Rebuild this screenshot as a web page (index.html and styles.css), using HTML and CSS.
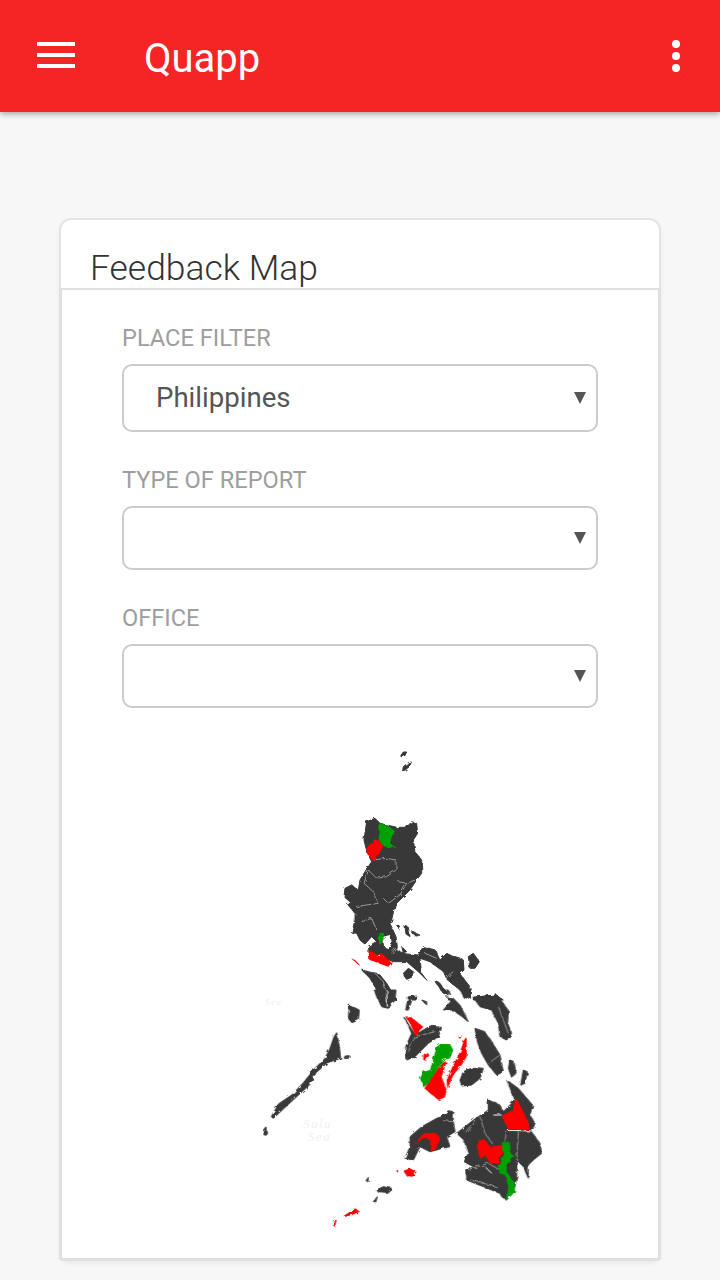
FILE: index.html
```html
<!DOCTYPE html>
<html>
  <head>
    <meta charset="utf-8" />
    <meta name="viewport" content="width=device-width, initial-scale=1" />
    <title>Quapp</title>
    <link rel="stylesheet" href="styles.css">
  </head>
  <body>
    <header class="toolbar">
      <button class="menu-btn" aria-label="Menu">
        <span></span><span></span><span></span>
      </button>
      <h1 class="app-title">Quapp</h1>
      <button class="more-btn" aria-label="More">
        <span></span><span></span><span></span>
      </button>
    </header>

    <main class="content">
      <section class="card">
        <div class="card-head">
          <h2>Feedback Map</h2>
        </div>
        <div class="card-body">
          <form class="filters">
            <label class="field">
              <span class="field-label">PLACE FILTER</span>
              <span class="select-wrap">
                <select class="tall"><option>Philippines</option></select>
              </span>
            </label>
            <label class="field">
              <span class="field-label">TYPE OF REPORT</span>
              <span class="select-wrap">
                <select><option></option></select>
              </span>
            </label>
            <label class="field">
              <span class="field-label">OFFICE</span>
              <span class="select-wrap">
                <select><option></option></select>
              </span>
            </label>
          </form>

          <!-- viewBox uses page coordinates -->
          <svg class="map" viewBox="62 720 596 538">
            <defs>
              <filter id="rough" x="0" y="0" width="100%" height="100%">
                <feTurbulence type="fractalNoise" baseFrequency=".2" numOctaves="2" seed="4" result="noise" />
                <feDisplacementMap in="SourceGraphic" in2="noise" scale="3.5" />
                <feGaussianBlur stdDeviation=".4" />
              </filter>
            </defs>

            <text class="sea" x="303" y="1128">Sulu</text>
            <text class="sea" x="308" y="1141">Sea</text>
            <text class="sea sea-small" x="265" y="1005">Sea</text>

            <g filter="url(#rough)">
            <!-- north: Batanes, Luzon, Mindoro, Bicol -->
            <g transform="translate(240 740) scale(.3333)">
              <path class="land" d="M482 48 490 36 500 36 494 48 486 52Z M488 92 490 80 505 68 514 66 510 78 496 90Z" />
              <path class="land" d="M380 245 405 235 420 250 470 262 500 262 515 245 530 250 533 280 520 300 525 335 545 360 545 400 530 420 510 450 490 470 465 495 455 540 450 550 468 590 472 620 470 632 500 642 535 645 550 620 585 630 600 660 620 640 640 650 670 660 672 690 660 702 690 740 692 775 660 750 622 720 610 695 570 665 540 655 545 700 558 718 535 695 500 665 460 665 420 650 388 640 385 618 410 605 395 590 375 612 360 600 350 580 335 578 345 540 345 520 320 490 335 490 312 470 315 445 335 435 355 450 360 420 375 395 395 365 385 345 378 325 372 300Z" />
              <path class="land" d="M365 690 385 695 420 705 440 730 470 780 415 780 410 750 390 715Z" />
              <path class="land" d="M488 702 505 685 520 695 515 712 500 718Z M685 650 700 640 718 665 705 685 690 685Z M585 725 600 730 625 765 610 760Z M700 772 770 765 790 780 700 780Z M515 770 530 768 528 780 510 780Z M620 770 640 778 640 780 625 780Z" />
              <path class="land" d="M472 556 482 560 478 568Z M495 558 505 562 510 590 498 582Z M515 572 540 586 520 584Z M485 620 500 635 490 638Z" />
              <path class="bay" d="M430 590 450 585 456 610 445 625 432 620Z" />
              <path class="seam" d="M400 360 440 355 468 360 468 390 440 410 410 415 385 390 372 430 400 455 415 490 345 500 M475 425 500 430 525 420 M500 430 480 465 445 490 430 475 M345 520 340 550 M365 545 395 535 410 570 M400 695 430 725 442 770 M620 712 640 695 M555 640 590 655 M455 640 470 620" />
              <path class="green" d="M418 250 440 255 462 270 455 295 450 310 470 325 435 320 425 312 415 295 420 275 413 265Z M413 595 420 580 432 578 428 605 420 615Z" />
              <path class="red" d="M378 325 405 298 415 300 430 320 405 362 395 360 385 345Z M385 630 412 645 425 640 455 668 445 680 415 670 405 665 388 660Z M333 655 345 660 365 680 350 670Z" />
              <circle class="bay" cx="418" cy="648" r="3" />
            </g>

            <!-- south: Palawan, Visayas, Mindanao, Sulu -->
            <g transform="translate(240 990) scale(.3333)">
              <path class="land" d="M403 0 468 0 465 30 445 55 425 50 410 20Z" />
              <path class="land" d="M328 45 358 60 355 90 335 98 325 85Z M290 128 298 170 302 205 262 218 228 248 208 285 172 318 132 355 100 385 94 380 115 342 155 315 190 278 222 238 255 205 270 175 282 140Z M70 420 78 410 80 435 72 435Z M315 198 328 197 325 205 313 205Z" />
              <path class="land" d="M495 85 525 135 570 108 605 112 595 140 565 160 525 200 500 210 497 170 515 130Z" />
              <path class="land" d="M660 270 670 245 700 232 730 235 720 265 695 285 665 288Z" />
              <path class="land" d="M700 22 770 15 790 40 805 60 803 100 815 130 800 150 780 140 775 100 755 60 720 50Z M705 115 735 125 755 155 780 195 790 245 770 255 745 225 725 190 712 155Z M810 210 822 215 828 250 815 262 805 235Z M850 240 862 245 855 280 842 285Z" />
              <path class="land" d="M610 60 640 25 660 45 685 95 640 60Z M610 0 625 0 632 14Z M660 0 692 0 685 25 670 22Z M505 20 520 18 505 60 497 60Z M545 30 560 35 560 45Z" />
              <path class="land" d="M800 270 835 295 878 345 870 375 885 400 875 425 900 460 905 490 880 510 865 525 865 565 850 530 830 510 830 560 825 590 800 630 785 620 780 610 680 570 680 540 700 530 672 515 685 490 672 450 650 430 700 390 745 360 745 330 780 345 790 365 825 330Z" />
              <path class="land" d="M625 362 640 365 640 395 645 425 620 440 630 470 605 475 590 480 570 485 540 470 520 510 495 505 510 470 510 440 545 410 590 385 605 380Z" />
              <path class="land" d="M408 600 430 590 455 595 440 607 415 605Z M400 635 412 620 408 635Z M378 572 385 562 384 575Z" />
              <path class="seam" d="M505 185 525 140 585 125 M680 430 705 395 M720 380 735 430 760 465 M795 455 800 420 M835 425 830 510 M680 540 745 520 780 540 M690 570 770 590 M610 392 640 395 M745 220 780 195 M775 50 805 130" />
              <path class="cut" d="M800 421 880 423 M760 375 785 375 M440 0 442 50 M735 530 755 550" />
              <path class="red" d="M495 80 510 78 550 110 525 135 510 100Z M550 195 560 185 568 195 558 212 550 210Z M610 212 620 215 605 260 620 300 615 322 595 330 570 310 553 295 590 240Z M680 140 680 200 665 225 640 255 622 297 620 270 635 235 660 185 672 150Z M655 140 665 135 660 148Z" />
              <path class="green" d="M600 162 630 162 640 180 630 205 610 210 590 240 565 280 550 292 540 265 550 245 570 240 580 205 590 170Z" />
              <path class="red" d="M520 465 550 430 585 428 602 445 585 480 572 483 570 450 550 445Z M828 320 865 395 870 420 805 418 785 378 818 360Z M712 450 735 450 750 470 785 465 790 475 775 518 750 520 735 495 722 510 715 490Z M490 542 510 535 530 545 518 560 500 558Z M470 540 474 540 474 547 470 547Z M310 678 345 655 360 665 335 675 318 680Z M280 690 290 690 285 710 280 708Z" />
              <path class="green" d="M785 457 810 457 812 490 820 495 800 525 800 545 825 580 825 605 797 634 805 590 795 555 778 550 775 530 790 495Z" />
            </g>
            </g>
          </svg>
        </div>
      </section>
    </main>
  </body>
</html>
```

FILE: styles.css
```css
* {
  box-sizing: border-box;
}
html,
body {
  margin: 0;
  background: #f7f7f7;
  font-family: Roboto, "Noto Sans", sans-serif;
}

/* toolbar */
.toolbar {
  display: flex;
  align-items: center;
  height: 112px;
  padding: 0 37px;
  background: #f52525;
  color: white;
  box-shadow: 0 2px 6px rgba(0, 0, 0, 0.35);
}
.toolbar button {
  display: flex;
  flex-direction: column;
  border: none;
  padding: 0;
  background: none;
}
.menu-btn {
  gap: 6.75px;
  width: 38px;
  margin-bottom: 2px;
}
.menu-btn span {
  height: 4px;
  background: white;
}
.app-title {
  flex: 1;
  margin: 0 0 0 69px;
  padding-top: 4px;
  font-size: 40px;
  font-weight: 400;
}
.more-btn {
  gap: 4px;
  margin-right: 3px;
}
.more-btn span {
  width: 8px;
  height: 8px;
  border-radius: 50%;
  background: white;
}

/* card */
.content {
  padding: 106px 59px 18px;
}
.card {
  border-radius: 12px;
  box-shadow: 0 3px 4px rgba(0, 0, 0, 0.05);
}
.card-head {
  height: 70px;
  padding: 28px 0 0 29px;
  background: white;
  border: 2px solid #e4e4e4;
  border-bottom: none;
  border-radius: 12px 12px 0 0;
}
.card-head h2 {
  margin: 0;
  font-size: 35.4px;
  font-weight: 300;
  line-height: 40px;
  color: #333;
}
.card-body {
  background: white;
  border: 3px solid #e0e0e0;
  border-top-width: 2px;
  border-radius: 0 0 4px 4px;
}

/* filters */
.filters {
  padding: 0 60px;
}
.field {
  display: block;
  padding-top: 32px;
}
.field-label {
  display: block;
  height: 42px;
  font-size: 23.6px;
  line-height: 32px;
  color: #9e9e9e;
}
.select-wrap {
  display: block;
  position: relative;
}
.select-wrap::after {
  content: "";
  position: absolute;
  top: 50%;
  right: 12px;
  margin-top: -6px;
  border-top: 12px solid #555;
  border-left: 6px solid transparent;
  border-right: 6px solid transparent;
}
select {
  display: block;
  width: 100%;
  height: 64px;
  padding: 0 32px 2px;
  border: 2px solid #ccc;
  border-radius: 10px;
  background: white;
  font-family: inherit;
  font-size: 27.6px;
  color: #555;
  appearance: none;
}
select.tall {
  height: 68px;
}

/* map */
.map {
  display: block;
  width: 596px;
  height: 538px;
  margin-top: 12px;
}
.land {
  fill: #383838;
  stroke: #383838;
  stroke-width: 3;
  stroke-linejoin: round;
}
.red {
  fill: #f00;
}
.green {
  fill: #00a000;
}
.bay {
  fill: #fff;
}
.seam {
  fill: none;
  stroke: #aaa;
  stroke-width: 2.5;
}
.cut {
  fill: none;
  stroke: #fff;
  stroke-width: 3;
}
.sea {
  font-family: "Liberation Serif", serif;
  font-style: italic;
  font-size: 13px;
  letter-spacing: 1.5px;
  fill: #f0f0f0;
}
.sea-small {
  font-size: 9px;
}
```
